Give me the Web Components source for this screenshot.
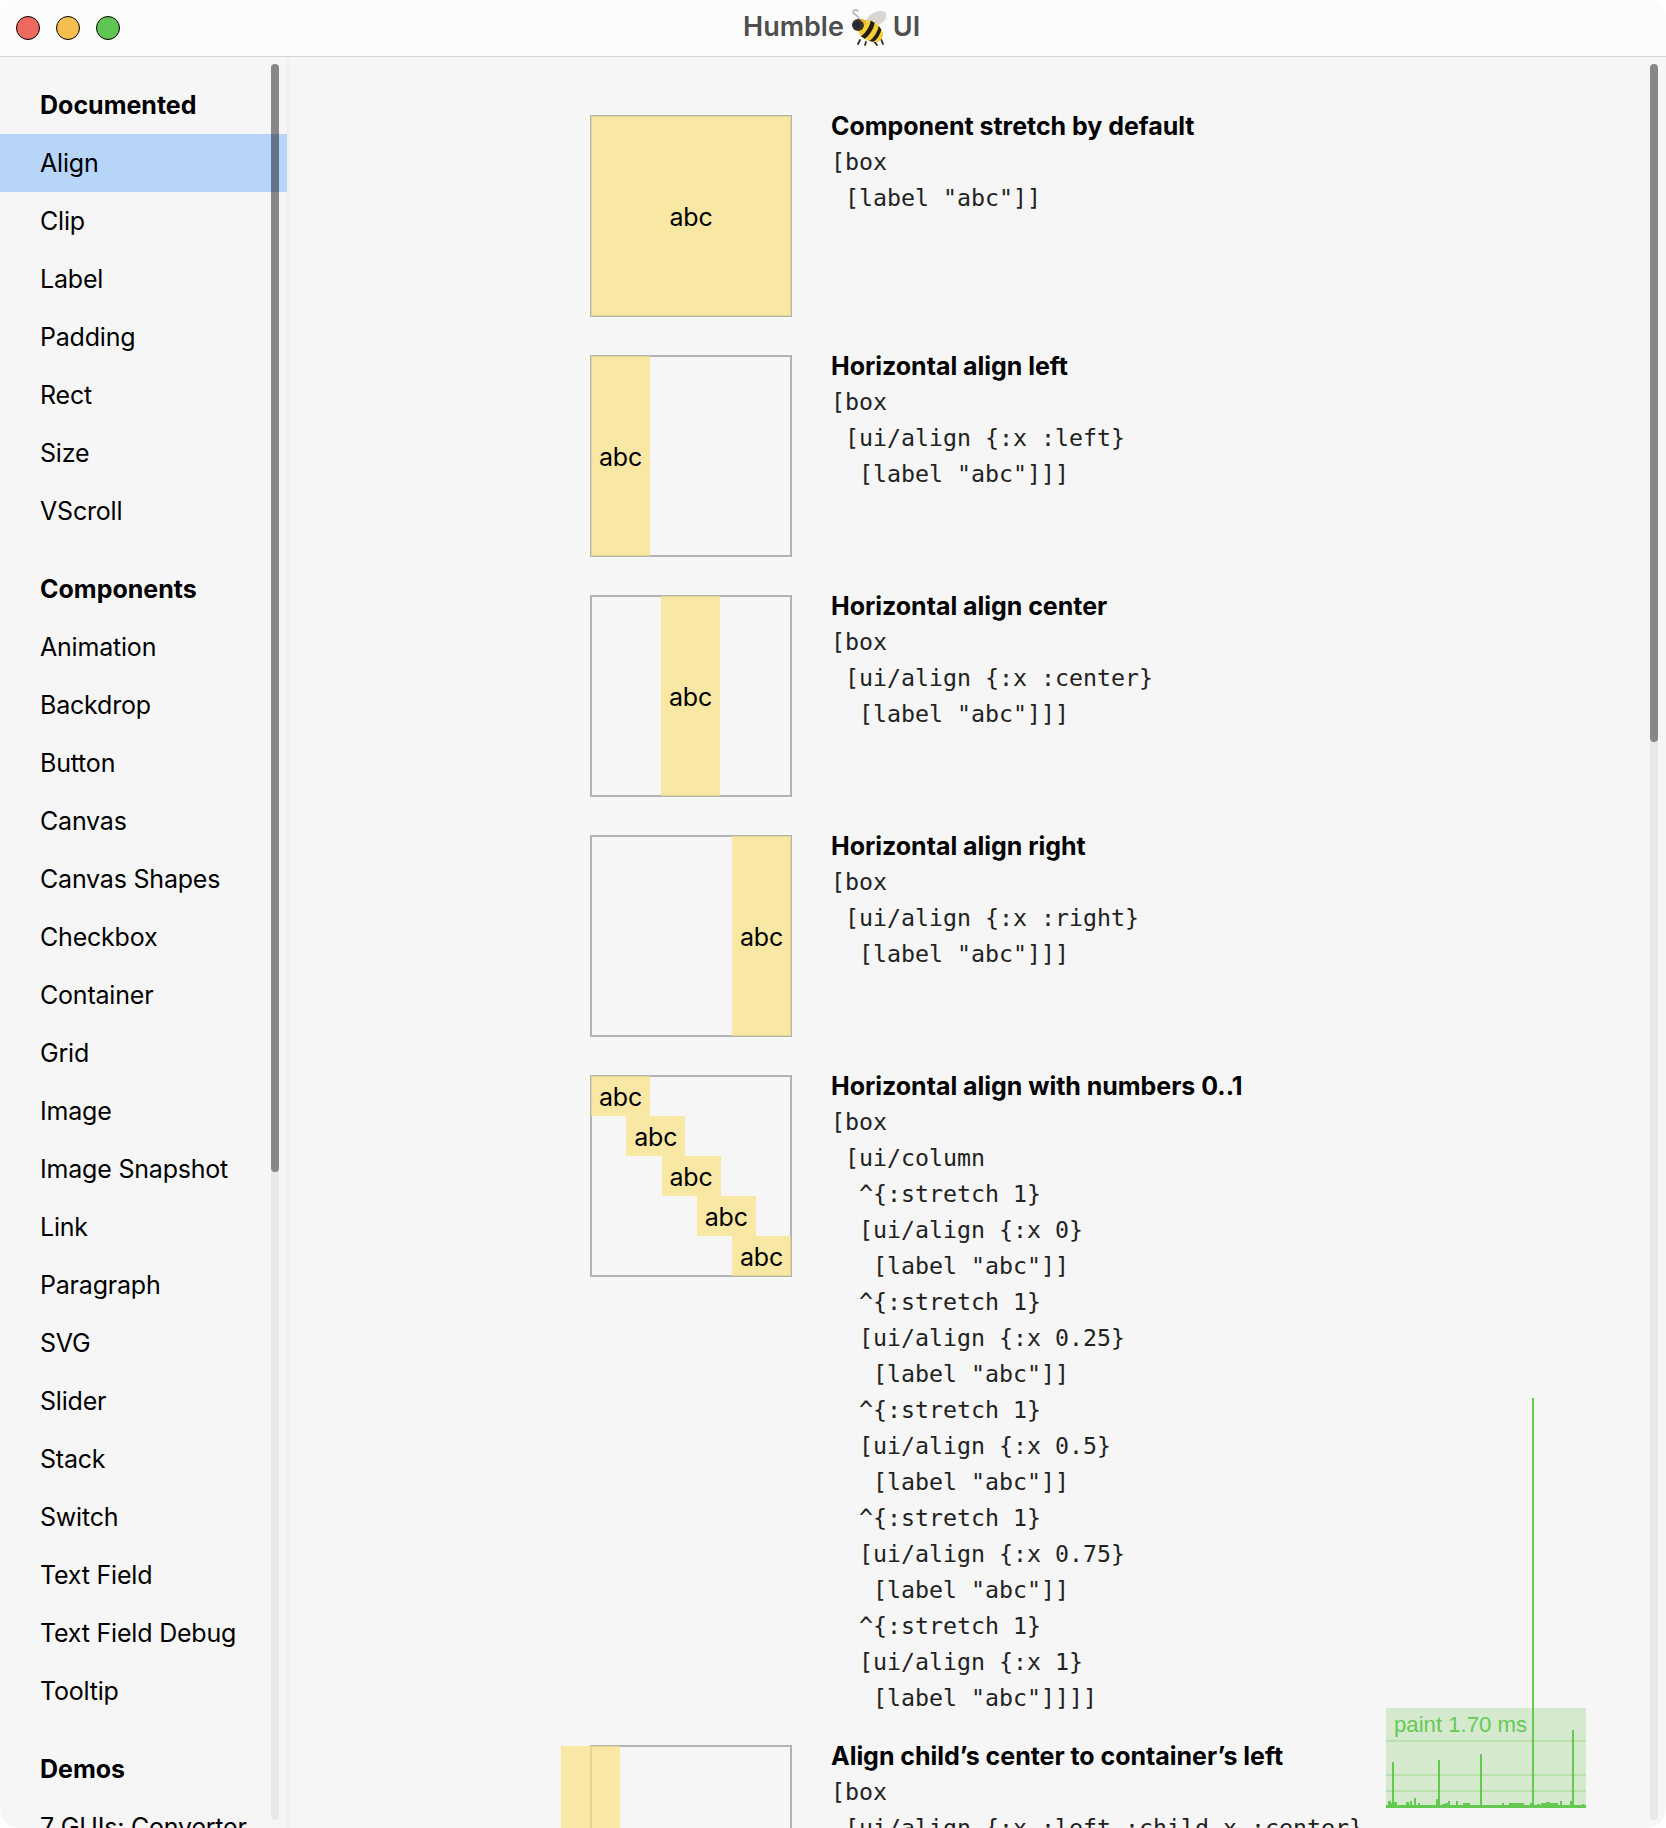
<!DOCTYPE html>
<html>
<head>
<meta charset="utf-8">
<title>Humble UI</title>
<style>
html, body { margin: 0; padding: 0; background: #fff; overflow: hidden; }
</style>
</head>
<body>
<app-window>
  <title-bar slot="bar"></title-bar>
  <side-nav slot="nav">
    <nav-group label="Documented">
      <nav-item selected>Align</nav-item>
      <nav-item>Clip</nav-item>
      <nav-item>Label</nav-item>
      <nav-item>Padding</nav-item>
      <nav-item>Rect</nav-item>
      <nav-item>Size</nav-item>
      <nav-item>VScroll</nav-item>
    </nav-group>
    <nav-group label="Components">
      <nav-item>Animation</nav-item>
      <nav-item>Backdrop</nav-item>
      <nav-item>Button</nav-item>
      <nav-item>Canvas</nav-item>
      <nav-item>Canvas Shapes</nav-item>
      <nav-item>Checkbox</nav-item>
      <nav-item>Container</nav-item>
      <nav-item>Grid</nav-item>
      <nav-item>Image</nav-item>
      <nav-item>Image Snapshot</nav-item>
      <nav-item>Link</nav-item>
      <nav-item>Paragraph</nav-item>
      <nav-item>SVG</nav-item>
      <nav-item>Slider</nav-item>
      <nav-item>Stack</nav-item>
      <nav-item>Switch</nav-item>
      <nav-item>Text Field</nav-item>
      <nav-item>Text Field Debug</nav-item>
      <nav-item>Tooltip</nav-item>
    </nav-group>
    <nav-group label="Demos">
      <nav-item>7 GUIs: Converter</nav-item>
    </nav-group>
  </side-nav>
  <demo-list slot="main">
    <align-demo heading="Component stretch by default">
      <preview-box slot="preview" justify="center"><abc-chip fill>abc</abc-chip></preview-box>
      <code-block>[box
 [label "abc"]]</code-block>
    </align-demo>
    <align-demo heading="Horizontal align left">
      <preview-box slot="preview"><abc-chip>abc</abc-chip></preview-box>
      <code-block>[box
 [ui/align {:x :left}
  [label "abc"]]]</code-block>
    </align-demo>
    <align-demo heading="Horizontal align center">
      <preview-box slot="preview" justify="center"><abc-chip>abc</abc-chip></preview-box>
      <code-block>[box
 [ui/align {:x :center}
  [label "abc"]]]</code-block>
    </align-demo>
    <align-demo heading="Horizontal align right">
      <preview-box slot="preview" justify="end"><abc-chip>abc</abc-chip></preview-box>
      <code-block>[box
 [ui/align {:x :right}
  [label "abc"]]]</code-block>
    </align-demo>
    <align-demo heading="Horizontal align with numbers 0..1">
      <preview-box slot="preview" ladder>
        <abc-chip style="--x:0">abc</abc-chip>
        <abc-chip style="--x:.25">abc</abc-chip>
        <abc-chip style="--x:.5">abc</abc-chip>
        <abc-chip style="--x:.75">abc</abc-chip>
        <abc-chip style="--x:1">abc</abc-chip>
      </preview-box>
      <code-block>[box
 [ui/column
  ^{:stretch 1}
  [ui/align {:x 0}
   [label "abc"]]
  ^{:stretch 1}
  [ui/align {:x 0.25}
   [label "abc"]]
  ^{:stretch 1}
  [ui/align {:x 0.5}
   [label "abc"]]
  ^{:stretch 1}
  [ui/align {:x 0.75}
   [label "abc"]]
  ^{:stretch 1}
  [ui/align {:x 1}
   [label "abc"]]]]</code-block>
    </align-demo>
    <align-demo heading="Align child’s center to container’s left">
      <preview-box slot="preview"><abc-chip hang>abc</abc-chip></preview-box>
      <code-block>[box
 [ui/align {:x :left :child-x :center}
  [label "abc"]]]</code-block>
    </align-demo>
  </demo-list>
  <paint-chart slot="main"></paint-chart>
</app-window>

<script>
class AppWindow extends HTMLElement {
  constructor() {
    super();
    this.attachShadow({ mode: 'open' }).innerHTML = `
      <style>
        :host { display: flex; flex-direction: column; width: 1666px; height: 1828px;
                background: #f6f6f6; border-radius: 20px; overflow: hidden; color: #000;
                font-family: Inter, "Liberation Sans", sans-serif; font-size: 25px; letter-spacing: -.2px; }
        .body { flex: 1; display: flex; min-height: 0; }
        .main { flex: 1; position: relative; overflow: hidden; }
      </style>
      <slot name="bar"></slot>
      <div class="body">
        <slot name="nav"></slot>
        <div class="main"><slot name="main"></slot><scroll-bar top="7" thumb="678"></scroll-bar></div>
      </div>`;
  }
}

class TitleBar extends HTMLElement {
  constructor() {
    super();
    this.attachShadow({ mode: 'open' }).innerHTML = `
      <style>
        :host { display: flex; align-items: center; position: relative; height: 56px; flex: none;
                background: #fcfcfc; border-bottom: 1px solid #d6d6d6; }
        .lights { display: flex; gap: 16px; padding-left: 16px; }
        .lights i { width: 22px; height: 22px; border-radius: 50%; border: 1px solid; }
        .red { background: #ee6a5f; border-color: #d9584e; }
        .yellow { background: #f5bf4f; border-color: #dca63c; }
        .green { background: #61c554; border-color: #53ad47; }
        .title { position: absolute; left: 743px; top: -2px; height: 56px; display: flex; align-items: center;
                 font-weight: 600; font-size: 27px; letter-spacing: 0; color: #4f4f4f; }
        svg { margin: 2px 7px 0 6px; display: block; }
      </style>
      <div class="lights"><i class="red"></i><i class="yellow"></i><i class="green"></i></div>
      <div class="title">Humble
        <svg width="36" height="40" viewBox="0 0 36 40">
          <ellipse cx="26" cy="12" rx="11.5" ry="6.5" transform="rotate(-28 26 12)" fill="#d9d6d0"/>
          <path d="M9 12C8 7 3 8 3 5C3 3 6 2 8 4" fill="none" stroke="#b9b5ae" stroke-width="1.6" stroke-linecap="round"/>
          <path d="M10 33L8 37M16 35L15 38M24 34L27 38M31 32L33 37" stroke="#33291c" stroke-width="1.8" stroke-linecap="round"/>
          <g transform="rotate(32 20 24)">
            <ellipse cx="20" cy="24" rx="14" ry="9.5" fill="#f6cf35"/>
            <path d="M15 14.8C17.5 19 17.5 29 15 33.2L19.5 33.5C22 29 22 19 19.5 14.5Z" fill="#241c12"/>
            <path d="M24.5 15C27 19 27 29 24.5 33L28.5 31.5C30.5 28 30.5 20 28.5 16.5Z" fill="#241c12"/>
          </g>
          <circle cx="8" cy="18" r="6" fill="#3b3327"/>
          <circle cx="7" cy="18" r="3" fill="#1f2a38"/>
          <path d="M11 13C14 13 15 15 15 18" fill="none" stroke="#e5b92e" stroke-width="2.4"/>
        </svg>
        UI</div>`;
  }
}

class ScrollBar extends HTMLElement {
  constructor() {
    super();
    const top = this.getAttribute('top');
    const thumb = this.getAttribute('thumb');
    this.attachShadow({ mode: 'open' }).innerHTML = `
      <style>
        :host { position: absolute; top: ${top}px; bottom: 8px; right: 8px; width: 8px;
                background: rgba(0,0,0,.055); border-radius: 4px; }
        div { height: ${thumb}px; background: rgba(0,0,0,.42); border-radius: 4px; }
      </style>
      <div></div>`;
  }
}

class SideNav extends HTMLElement {
  constructor() {
    super();
    this.attachShadow({ mode: 'open' }).innerHTML = `
      <style>
        :host { display: block; position: relative; flex: none; width: 287px; box-sizing: content-box;
                border-right: 2px solid #efefef; overflow: hidden; }
        .list { display: flex; flex-direction: column; gap: 20px; padding-top: 19px; }
        scroll-bar { right: 8px; }
      </style>
      <div class="list"><slot></slot></div>
      <scroll-bar top="7" thumb="1108"></scroll-bar>`;
  }
}

class NavGroup extends HTMLElement {
  constructor() {
    super();
    this.attachShadow({ mode: 'open' }).innerHTML = `
      <style>
        :host { display: block; }
        h4 { margin: 0; height: 58px; line-height: 59px; padding-left: 40px; font-size: 25px; letter-spacing: 0; font-weight: 700; }
      </style>
      <h4>${this.getAttribute('label')}</h4>
      <slot></slot>`;
  }
}

class NavItem extends HTMLElement {
  constructor() {
    super();
    this.attachShadow({ mode: 'open' }).innerHTML = `
      <style>
        :host { display: block; height: 58px; line-height: 59px; padding-left: 40px; white-space: nowrap; }
        :host([selected]) { background: #b7d4f9; }
      </style>
      <slot></slot>`;
  }
}

class DemoList extends HTMLElement {
  constructor() {
    super();
    this.attachShadow({ mode: 'open' }).innerHTML = `
      <style>
        :host { display: flex; flex-direction: column; gap: 40px; padding: 59px 0 0 302px; }
      </style>
      <slot></slot>`;
  }
}

class AlignDemo extends HTMLElement {
  constructor() {
    super();
    this.attachShadow({ mode: 'open' }).innerHTML = `
      <style>
        :host { display: grid; grid-template-columns: 200px 1fr; column-gap: 40px; align-items: start; }
        h3 { margin: 0 0 8px; height: 20px; line-height: 20px; font-size: 25px; letter-spacing: -.03px; font-weight: 700; white-space: nowrap; }
        .text { margin-bottom: -10px; }
      </style>
      <slot name="preview"></slot>
      <div class="text">
        <h3>${this.getAttribute('heading')}</h3>
        <slot></slot>
      </div>`;
  }
}

class CodeBlock extends HTMLElement {
  constructor() {
    super();
    this.attachShadow({ mode: 'open' }).innerHTML = `<style>
        :host { display: block; line-height: 36px; font-size: 23.25px; letter-spacing: 0;
                font-family: "DejaVu Sans Mono", "Liberation Mono", monospace; color: #222; }
        div { white-space: pre; }
      </style><div><slot></slot></div>`;
  }
}

class PreviewBox extends HTMLElement {
  constructor() {
    super();
    this.attachShadow({ mode: 'open' }).innerHTML = `
      <style>
        :host { display: flex; position: relative; z-index: 0; width: 200px; height: 200px; }
        :host([justify=center]) { justify-content: center; }
        :host([justify=center]) ::slotted(abc-chip:not([fill])) { margin-right: 1px; }
        :host([justify=end]) { justify-content: flex-end; }
        :host([ladder]) { flex-direction: column; }
        :host::before { content: ""; position: absolute; inset: -1px; border: 2px solid #b3b3b3; z-index: -1; }
      </style>
      <slot></slot>`;
  }
}

class AbcChip extends HTMLElement {
  constructor() {
    super();
    this.attachShadow({ mode: 'open' }).innerHTML = `
      <style>
        :host { display: flex; align-items: center; justify-content: center; flex: 0 0 59px; width: 59px;
                box-sizing: border-box; padding-top: 1px; background: rgba(250,226,129,.7); }
        :host([fill]) { flex: 1 1 auto; }
        :host([hang]) { margin-left: -30px; }
        :host([style]) { flex: 0 0 40px; margin-left: calc((100% - 59px) * var(--x)); }
      </style>
      <slot></slot>`;
  }
}

class PaintChart extends HTMLElement {
  constructor() {
    super();
    // x, width, height of the noise along the baseline
    const noise = [[1388,3,7],[1391,2,5],[1394,3,6],[1397,5,3],[1406,3,6],[1410,2,7],[1414,2,10],[1418,2,5],[1428,2,3],[1436,3,9],
      [1439,3,3],[1442,3,4],[1445,3,5],[1448,2,7],[1456,2,7],[1460,3,3],[1463,7,5],[1473,2,2],[1482,2,3],[1488,2,2],[1502,2,5],[1509,15,5],
      [1530,3,5],[1534,3,3],[1537,3,4],[1541,5,5],[1546,4,6],[1550,8,5],[1556,2,3],[1560,2,7],[1566,4,3],[1570,3,7],[1576,2,2],[1582,2,4]];
    const spikes = [[1392,46],[1438,48],[1480,54],[1532,410],[1572,78]];
    let bars = '';
    for (const [x, w, h] of noise) bars += `<rect x="${x - 1386}" y="${400 - h}" width="${w}" height="${h}"/>`;
    for (const [x, h] of spikes) bars += `<rect x="${x - 1386}" y="${400 - h}" width="2" height="${h}"/>`;
    this.attachShadow({ mode: 'open' }).innerHTML = `
      <style>
        :host { position: absolute; left: 1097px; top: 1651px; width: 200px; height: 100px; background: #d5e9cf; }
        span { position: absolute; left: 8px; top: 3px; font: 22.2px/28px "Liberation Sans", sans-serif; letter-spacing: 0; color: #66c955; white-space: nowrap; }
        svg { position: absolute; left: 0; bottom: 0; display: block; overflow: visible; }
      </style>
      <span>paint 1.70 ms</span>
      <svg width="200" height="400" viewBox="0 0 200 400">
        <g fill="#b9e2ae"><rect y="332" width="200" height="2"/><rect y="366" width="200" height="2"/><rect y="382" width="200" height="2"/></g>
        <g fill="#63c950"><rect y="397" width="200" height="3"/>${bars}</g>
      </svg>`;
  }
}

customElements.define('scroll-bar', ScrollBar);
customElements.define('app-window', AppWindow);
customElements.define('title-bar', TitleBar);
customElements.define('side-nav', SideNav);
customElements.define('nav-group', NavGroup);
customElements.define('nav-item', NavItem);
customElements.define('demo-list', DemoList);
customElements.define('align-demo', AlignDemo);
customElements.define('code-block', CodeBlock);
customElements.define('preview-box', PreviewBox);
customElements.define('abc-chip', AbcChip);
customElements.define('paint-chart', PaintChart);
</script>
</body>
</html>
